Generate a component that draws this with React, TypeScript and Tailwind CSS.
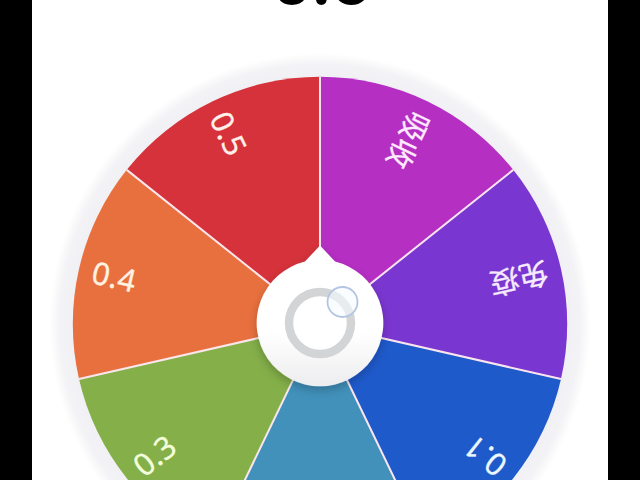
const CX = 320;
const CY = 324;
const RADIUS = 247.2;
const STEP = 360 / 7;

const numberText = "text-[31px] tracking-[0.2px]";
const wordText = "text-[29.5px]";

const sectors = [
  { label: "吸收", color: "#b52fc3", text: "#fdeaff", size: wordText },
  { label: "免疫", color: "#7a36d0", text: "#f6eaff", size: wordText },
  { label: "0.1", color: "#1f5acb", text: "#ebf8ff", size: numberText },
  { label: "0.2", color: "#4191bb", text: "#ebfbff", size: numberText },
  { label: "0.3", color: "#84af49", text: "#f3ffdc", size: numberText },
  { label: "0.4", color: "#e8703e", text: "#fff2e2", size: numberText },
  { label: "0.5", color: "#d6323b", text: "#fff0ea", size: numberText },
];

function point(angle: number, r: number) {
  const rad = (angle * Math.PI) / 180;
  return `${CX + r * Math.sin(rad)} ${CY - r * Math.cos(rad)}`;
}

function Wheel() {
  return (
    <svg
      viewBox="0 0 640 480"
      className="block h-[480px] w-[640px] shrink-0"
    >
      <defs>
        <radialGradient id="rim" gradientUnits="userSpaceOnUse" cx={CX} cy={CY} r="272">
          <stop offset="0.91" stopColor="#f1f1f5" />
          <stop offset="0.955" stopColor="#f3f3f6" />
          <stop offset="0.975" stopColor="#f9f9fa" />
          <stop offset="0.995" stopColor="#ffffff" />
        </radialGradient>
        <linearGradient id="knob" x1="0" y1="0" x2="0" y2="1">
          <stop offset="0.62" stopColor="#ffffff" />
          <stop offset="1" stopColor="#ededef" />
        </linearGradient>
        <filter id="shadow" x="-30%" y="-30%" width="160%" height="160%">
          <feDropShadow dx="0" dy="4" stdDeviation="5" floodColor="#000" floodOpacity="0.22" />
        </filter>
      </defs>

      <circle cx={CX} cy={CY} r="272" fill="url(#rim)" />

      {sectors.map((s, i) => (
        <path
          key={s.label}
          d={`M${CX} ${CY}L${point(i * STEP, RADIUS)}A${RADIUS} ${RADIUS} 0 0 1 ${point((i + 1) * STEP, RADIUS)}Z`}
          fill={s.color}
        />
      ))}
      {sectors.map((s, i) => (
        <path
          key={s.label}
          d={`M${CX} ${CY}L${point(i * STEP, RADIUS)}`}
          stroke="#fbe6ee"
          strokeWidth="2"
        />
      ))}

      {/* labels start at the rim and read towards the centre */}
      {sectors.map((s, i) => (
        <text
          key={s.label}
          x={CX - 233.5}
          y={CY + 11}
          transform={`rotate(${(i + 0.5) * STEP + 90} ${CX} ${CY})`}
          fill={s.text}
          stroke={s.text}
          strokeWidth="0.3"
          className={`font-['Noto_Sans','Noto_Sans_CJK_SC',sans-serif] ${s.size}`}
        >
          {s.label}
        </text>
      ))}

      <g filter="url(#shadow)">
        <path
          d="M320 245.5L335 261.5A63.3 63.3 0 1 1 305 261.5Z"
          fill="url(#knob)"
        />
      </g>
      <circle cx="320" cy="323" r="31" fill="#fff" stroke="#d3d4d6" strokeWidth="8.4" />
      <circle
        cx="342.5"
        cy="302"
        r="15"
        fill="#f5fcff"
        fillOpacity="0.6"
        stroke="#b4c5e3"
        strokeWidth="1.8"
      />
    </svg>
  );
}

export default function App() {
  return (
    <div className="flex h-[480px] w-[640px] justify-center overflow-hidden bg-black">
      <main className="relative flex w-[576px] justify-center overflow-hidden bg-white">
        <Wheel />
        <h1 className="absolute top-[-58px] left-0 w-full pl-0.5 text-center font-['Inter',sans-serif] text-[62px] leading-[80px] font-bold text-black">
          0.5
        </h1>
      </main>
    </div>
  );
}
